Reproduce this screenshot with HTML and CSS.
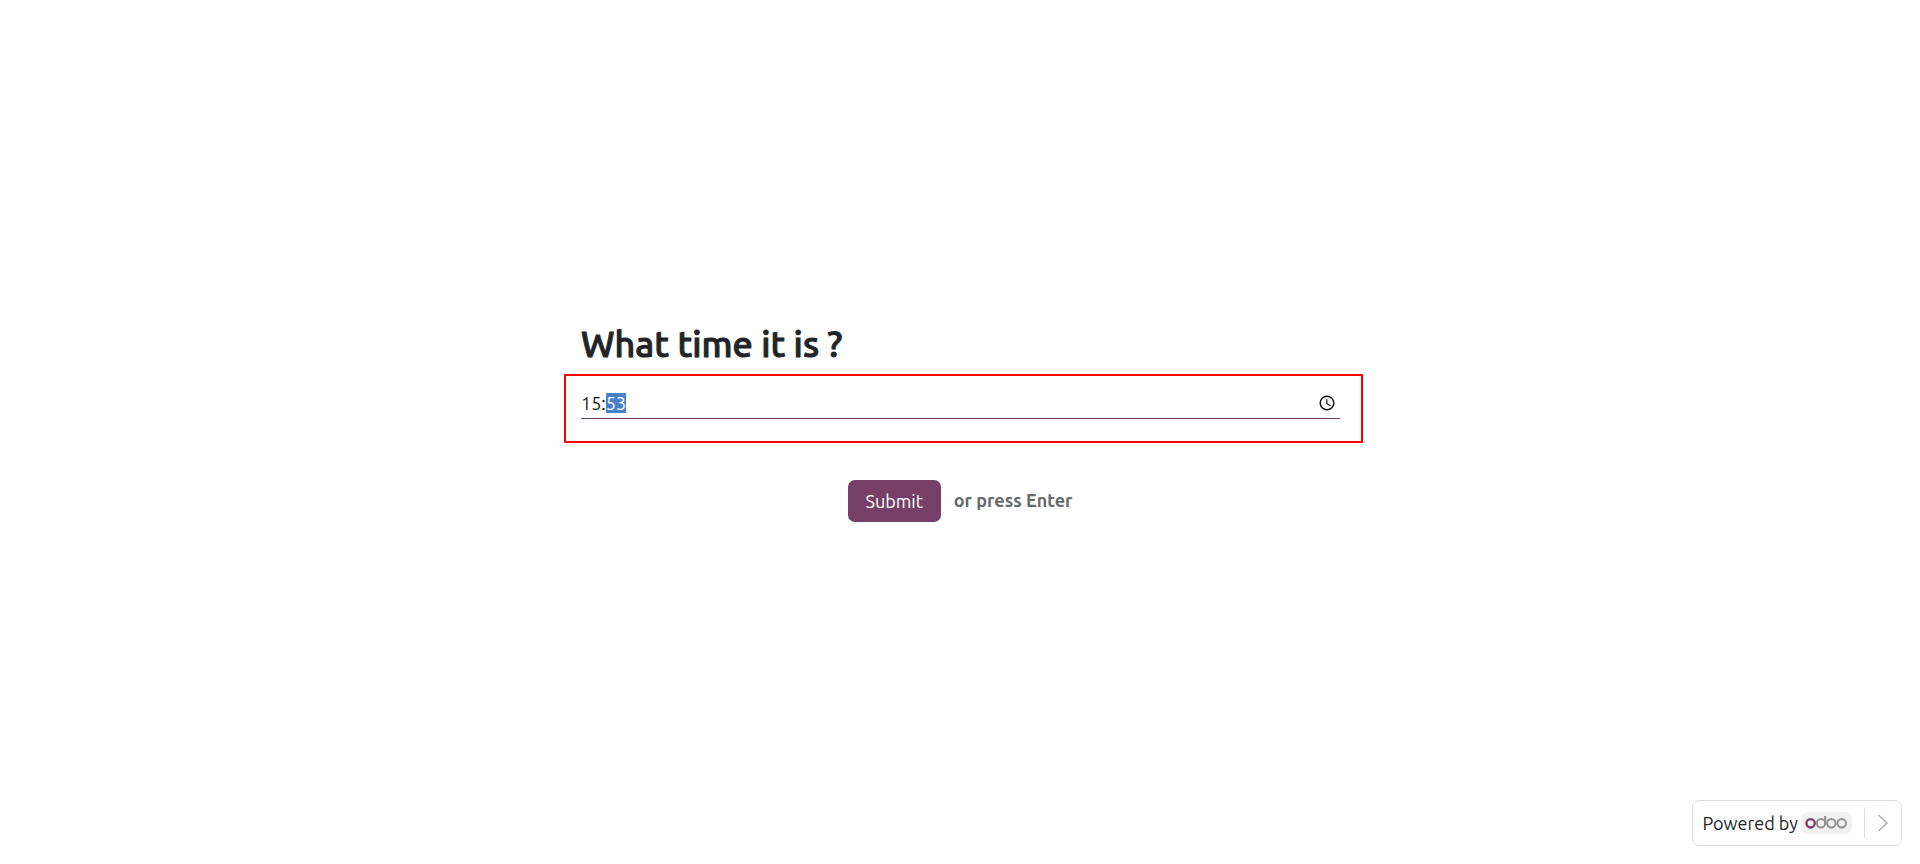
FILE: index.html
```html
<!DOCTYPE html>
<html lang="en">
<head>
<meta charset="utf-8">
<meta name="viewport" content="width=device-width, initial-scale=1">
<title>Survey</title>
<link rel="stylesheet" href="styles.css">
</head>
<body>
<main class="survey">
  <form class="survey-form">
    <h1 class="question"><label for="answer">What time it is ?</label></h1>
    <div class="answer-frame">
      <div class="answer-field">
        <input class="answer-input" id="answer" type="text" value="15:53" autocomplete="off" spellcheck="false">
        <button class="picker" type="button" aria-label="Show time picker">
          <svg width="16" height="16" viewBox="0 0 16 16" fill="none" stroke="#111" stroke-width="1.5"><circle cx="8" cy="8" r="6.8"/><path d="M7.8 4.2v4.2l3.6 2.4" stroke-width="1.2"/></svg>
        </button>
      </div>
    </div>
    <div class="actions">
      <button class="submit" type="submit">Submit</button>
      <span class="hint">or press Enter</span>
    </div>
  </form>
</main>
<footer class="brand">
  <a class="brand-link" href="#">Powered by
    <span class="brand-logo">
      <svg role="img" aria-label="odoo" width="42" height="14" viewBox="0 0 42 14" fill="none" stroke="#8f8f8f" stroke-width="2"><circle cx="5.6" cy="8.3" r="4.2" stroke="#763f67" stroke-width="2.3"/><circle cx="16" cy="8.3" r="4.2"/><path d="M20.2 1v7.5"/><circle cx="26.3" cy="8.3" r="4.2"/><circle cx="36.7" cy="8.3" r="4.2"/></svg>
    </span>
  </a>
  <button class="next" type="button" aria-label="Next">
    <svg width="12" height="18" viewBox="0 0 12 18" fill="none" stroke="#b5b5b5" stroke-width="1.7"><path d="M1.5 1l8.5 8-8.5 8"/></svg>
  </button>
</footer>
<script src="script.js"></script>
</body>
</html>
```
FILE: styles.css
```css
* { box-sizing: border-box; }

body {
  margin: 0;
  background: #fff;
  color: #212529;
  font-family: Ubuntu, "Noto Sans", sans-serif;
  font-size: 18px;
  line-height: 26px;
}

button, input { font: inherit; }

.survey {
  min-height: 100vh;
  padding: 0 20px 20px;
  display: flex;
  align-items: center;
  justify-content: center;
}

.survey-form {
  width: 100%;
  max-width: 758px;
}

.question {
  margin: 0 0 8px;
  font-size: 36px;
  line-height: 44px;
  font-weight: 500;
  -webkit-text-stroke: 1px currentColor;
}

.answer-frame {
  margin: 0 -24px 0 -17px;
  padding: 12px 21px 22px 15px;
  border: 2px solid #f00;
  border-radius: 1px;
}

.answer-field {
  display: flex;
  align-items: center;
  border-bottom: 1px solid #763f67;
}

.answer-input {
  flex: 1;
  min-width: 0;
  height: 30px;
  padding: 0;
  border: 0;
  outline: 0;
  background: transparent;
  color: #111417;
}

.answer-input::selection {
  background: #4a7fc9;
  color: #fff;
}

.picker {
  display: flex;
  padding: 0 5px;
  border: 0;
  background: none;
}

.actions {
  margin-top: 37px;
  display: flex;
  align-items: center;
  justify-content: center;
  gap: 13px;
}

.submit {
  height: 42px;
  padding: 0 18px;
  border: 0;
  border-radius: 7px;
  background: #763f67;
  color: #fff;
}

.hint {
  padding-bottom: 3px;
  color: #666a6d;
  font-weight: 700;
}

.brand {
  position: fixed;
  right: 18px;
  bottom: 18px;
  height: 46px;
  padding-left: 9px;
  display: flex;
  align-items: center;
  border: 1px solid #dedede;
  border-radius: 7px;
  background: #fff;
}

.brand-link {
  display: flex;
  align-items: center;
  gap: 3px;
  color: inherit;
  text-decoration: none;
}

.brand-logo {
  display: flex;
  padding: 3px 5px 5px 4px;
  border-radius: 7px;
  background: #f1f1f1;
}

.next {
  height: 33px;
  margin-left: 12px;
  padding: 0 12px;
  display: flex;
  align-items: center;
  border: 0;
  border-left: 1px solid #dedede;
  border-radius: 4px;
  background: none;
}
```
FILE: script.js
```js
const answer = document.getElementById("answer");
answer.focus();
answer.setSelectionRange(3, 5);
```
